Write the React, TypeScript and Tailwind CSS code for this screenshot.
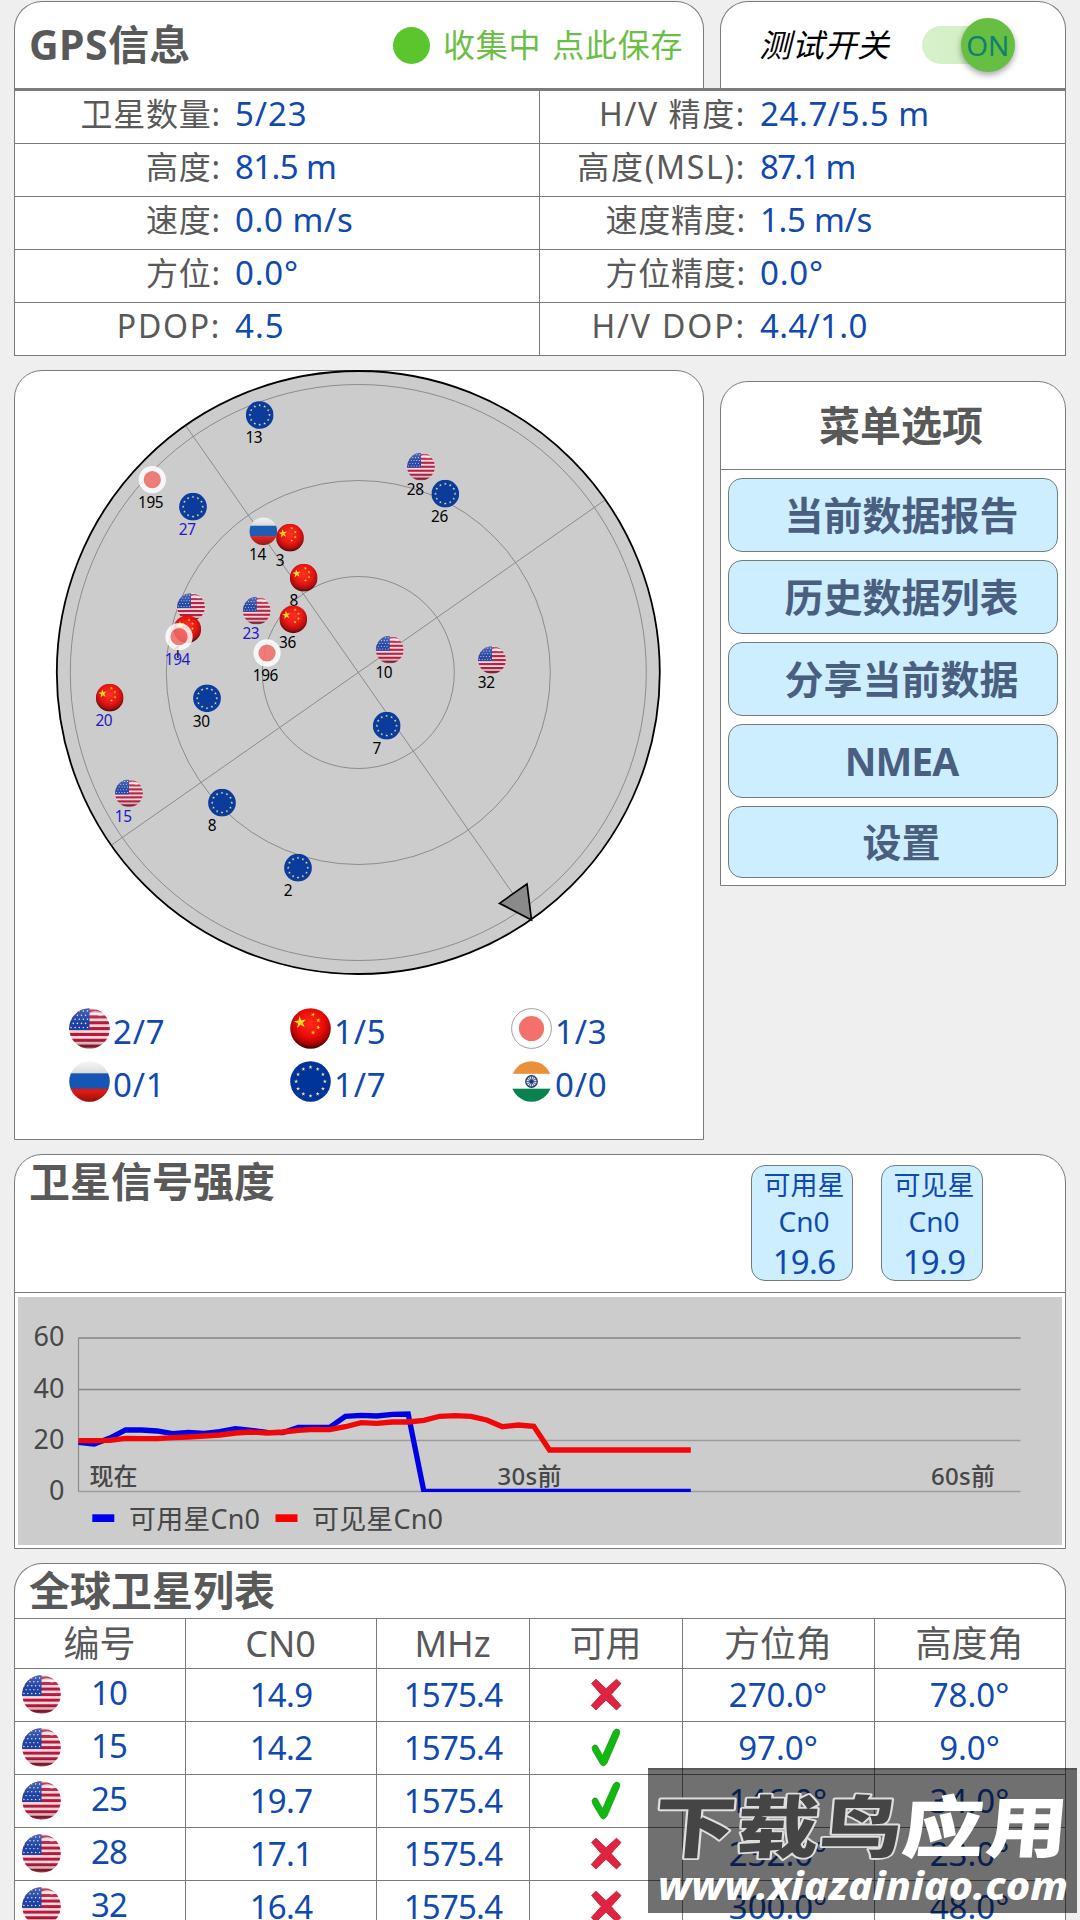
import React from "react";

type Country = "us" | "cn" | "jp" | "ru" | "eu" | "in";

const STAR = "M0,-1 L0.225,-0.309 L0.951,-0.309 L0.363,0.118 L0.588,0.809 L0,0.382 L-0.588,0.809 L-0.363,0.118 L-0.951,-0.309 L-0.225,-0.309 Z";

function SharedDefs() {
  return (
    <svg className="absolute size-0" aria-hidden="true">
      <defs>
        <clipPath id="disc">
          <circle cx="20" cy="20" r="19.8" />
        </clipPath>
        <linearGradient id="gloss" x1="0" y1="0" x2="0" y2="1">
          <stop offset="0" stopColor="#fff" stopOpacity="0.2" />
          <stop offset="0.35" stopColor="#fff" stopOpacity="0" />
          <stop offset="0.75" stopColor="#000" stopOpacity="0" />
          <stop offset="1" stopColor="#000" stopOpacity="0.35" />
        </linearGradient>
        <radialGradient id="redBall" cx="0.5" cy="0.38" r="0.62">
          <stop offset="0" stopColor="#ff2a1a" />
          <stop offset="0.55" stopColor="#ea0b08" />
          <stop offset="0.82" stopColor="#a80404" />
          <stop offset="1" stopColor="#3c0000" />
        </radialGradient>
        <linearGradient id="ruWhite" x1="0" y1="0" x2="0" y2="1">
          <stop offset="0" stopColor="#f4f4f4" />
          <stop offset="1" stopColor="#d8d8d8" />
        </linearGradient>
      </defs>
    </svg>
  );
}

function FlagArt({ country }: { country: Country }) {
  switch (country) {
    case "us":
      return (
        <g clipPath="url(#disc)">
          <rect width="40" height="40" fill="#fbd5dc" />
          {[1.5, 7.2, 12.9, 18.6, 24.3, 30, 35.7].map((y) => (
            <rect key={y} y={y} width="40" height="3" fill="#b31b3c" />
          ))}
          <rect width="20" height="21.5" fill="#1c41a2" />
          {[3, 7, 11, 15, 19].map((y, r) =>
            [2, 6, 10, 14, 18].map((x) => (
              <circle key={`${x}-${y}`} cx={x + (r % 2 ? -1.8 : 0)} cy={y} r="0.75" fill="#dfe6fa" />
            )),
          )}
          <path d="M21 4 Q29 1 34 7 L30 8 Q26 5 21 6 Z" fill="#fff" opacity="0.55" />
          <rect width="40" height="40" fill="url(#gloss)" />
        </g>
      );
    case "cn":
      return (
        <g>
          <circle cx="20" cy="20" r="19.8" fill="url(#redBall)" />
          <path d={STAR} transform="translate(10 14) scale(6.3) rotate(-8)" fill="#ffd91a" />
          <path d={STAR} transform="translate(22.5 6.5) scale(2.3) rotate(20)" fill="#ffd21a" />
          <path d={STAR} transform="translate(27.5 12) scale(2.3)" fill="#ffd21a" />
          <path d={STAR} transform="translate(27.5 19) scale(2.3) rotate(20)" fill="#ffd21a" />
          <path d={STAR} transform="translate(22.5 24) scale(2.3)" fill="#ffd21a" />
        </g>
      );
    case "jp":
      return (
        <g>
          <circle cx="20" cy="20" r="19.5" fill="#fff" />
          <circle cx="20" cy="20" r="12.3" fill="#f4706c" />
        </g>
      );
    case "ru":
      return (
        <g clipPath="url(#disc)">
          <rect width="40" height="13" fill="url(#ruWhite)" />
          <rect y="12" width="40" height="15.5" fill="#1556b4" />
          <rect y="27" width="40" height="13" fill="#dc1a12" />
          <rect width="40" height="40" fill="url(#gloss)" />
        </g>
      );
    case "eu":
      return (
        <g>
          <circle cx="20" cy="20" r="19.8" fill="#00349a" />
          {Array.from({ length: 12 }, (_, i) => {
            const a = (i * Math.PI) / 6;
            return (
              <path
                key={i}
                d={STAR}
                transform={`translate(${20 + 14 * Math.sin(a)} ${20 - 14 * Math.cos(a)}) scale(2.1)`}
                fill="#f3e6a0"
              />
            );
          })}
        </g>
      );
    case "in":
      return (
        <g>
          <g clipPath="url(#disc)">
            <rect width="40" height="40" fill="#fff" />
            <rect width="40" height="12.5" fill="#e8913a" />
            <rect y="27" width="40" height="13" fill="#0c8150" />
          </g>
          <circle cx="20" cy="20" r="5.6" fill="#dfe7f5" stroke="#1c3a6e" strokeWidth="1.3" />
          {Array.from({ length: 6 }, (_, i) => (
            <line key={i} x1="14.8" y1="20" x2="25.2" y2="20" stroke="#1c3a6e" strokeWidth="0.7" transform={`rotate(${i * 30} 20 20)`} />
          ))}
          <circle cx="20" cy="20" r="1.8" fill="#1c3a6e" />
        </g>
      );
  }
}

function Flag({ country, className }: { country: Country; className: string }) {
  return (
    <svg viewBox="0 0 40 40" className={className}>
      <FlagArt country={country} />
      {country === "jp" && <circle cx="20" cy="20" r="19.4" fill="none" stroke="#8a8a8a" strokeWidth="0.8" />}
    </svg>
  );
}

type Field = { label: string; value: string; labelSpacing: string; spacing: string };

const INFO: [Field, Field][] = [
  [
    { label: "卫星数量:", value: "5/23", labelSpacing: "tracking-[0.8px]", spacing: "tracking-[0.9px]" },
    { label: "H/V 精度:", value: "24.7/5.5 m", labelSpacing: "tracking-[1.6px]", spacing: "tracking-[0.6px]" },
  ],
  [
    { label: "高度:", value: "81.5 m", labelSpacing: "tracking-[0.8px]", spacing: "tracking-[-0.6px]" },
    { label: "高度(MSL):", value: "87.1 m", labelSpacing: "tracking-[1.7px]", spacing: "tracking-[-1.7px]" },
  ],
  [
    { label: "速度:", value: "0.0 m/s", labelSpacing: "tracking-[0.8px]", spacing: "tracking-[0.6px]" },
    { label: "速度精度:", value: "1.5 m/s", labelSpacing: "tracking-[0.8px]", spacing: "tracking-[-0.3px]" },
  ],
  [
    { label: "方位:", value: "0.0°", labelSpacing: "tracking-[0.8px]", spacing: "tracking-[0.8px]" },
    { label: "方位精度:", value: "0.0°", labelSpacing: "tracking-[0.8px]", spacing: "tracking-[0.8px]" },
  ],
  [
    { label: "PDOP:", value: "4.5", labelSpacing: "tracking-[1.7px]", spacing: "tracking-[1px]" },
    { label: "H/V DOP:", value: "4.4/1.0", labelSpacing: "tracking-[1.9px]", spacing: "tracking-[0.3px]" },
  ],
];

function InfoCell({ label, value, labelSpacing, spacing }: Field) {
  return (
    <div className="flex items-center pb-[7px] leading-none">
      <span className={`w-[206px] text-right text-[32px] text-[#595959] ${labelSpacing}`}>{label}</span>
      <span className={`ml-[14px] text-[33px] font-[450] text-[#1049b0] ${spacing}`}>{value}</span>
    </div>
  );
}

function InfoPanel() {
  return (
    <section>
      <div className="flex justify-between">
        <div className="flex h-[87px] w-[690px] items-center rounded-t-[28px] border border-b-0 border-[#7b7b7b] bg-white pl-[14px]">
          <h1 className="w-[364px] text-[41px] font-bold tracking-[0.4px] text-[#595959]">GPS信息</h1>
          <span className="size-[37px] rounded-full bg-[#5ac52d]" />
          <span className="ml-[13px] text-[32px] tracking-[0.75px] text-[#6cbe45] [word-spacing:2px]">收集中 点此保存</span>
        </div>
        <div className="flex h-[87px] w-[346px] items-center rounded-t-[28px] border border-b-0 border-[#7b7b7b] bg-white pl-[38px]">
          <span className="text-[32px] tracking-[0.7px] text-black italic">测试开关</span>
          <span className="ml-[32px] flex h-[38px] w-[88px] items-center justify-end rounded-full bg-gradient-to-r from-[#d8f1cc] to-[#cdedc0]">
            <span className="-mr-[5px] flex size-[54px] shrink-0 items-center justify-center rounded-full bg-[#66bf42] text-[28px] text-[#10806f] shadow-[0_3px_6px_rgba(0,0,0,0.35)]">
              ON
            </span>
          </span>
        </div>
      </div>
      <div className="border-x border-t-[3px] border-[#7b7b7b] bg-white">
        {INFO.map(([left, right]) => (
          <div key={left.label} className="grid h-[53px] grid-cols-2 divide-x divide-[#7b7b7b] border-b border-[#7b7b7b]">
            <InfoCell {...left} />
            <InfoCell {...right} />
          </div>
        ))}
      </div>
    </section>
  );
}

const SATS: [Country, string, number, number, boolean][] = [
  ["eu", "13", 259.7, 415, false],
  ["jp", "195", 152.3, 479.7, false],
  ["eu", "27", 193, 506.7, true],
  ["ru", "14", 263.3, 531.3, false],
  ["cn", "3", 290, 537.7, false],
  ["us", "28", 421, 466.7, false],
  ["eu", "26", 445.3, 493.7, false],
  ["cn", "8", 303.7, 577.7, false],
  ["us", "", 191, 607, true],
  ["cn", "1", 187.3, 629.3, false],
  ["jp", "194", 179, 636.7, true],
  ["us", "23", 256.7, 610.7, true],
  ["cn", "36", 293.3, 619.3, false],
  ["jp", "196", 267, 653, false],
  ["us", "10", 389.7, 649.7, false],
  ["us", "32", 492, 660, false],
  ["cn", "20", 109.7, 697.7, true],
  ["eu", "30", 207, 698.3, false],
  ["us", "15", 129, 793.3, true],
  ["eu", "8", 222, 802.7, false],
  ["eu", "2", 298, 867.7, false],
  ["eu", "7", 386.7, 725.7, false],
];

function SkyPlot() {
  const cx = 358.3;
  const cy = 672.5;
  return (
    <svg viewBox="15 370 688 610" className="-mt-px block h-[610px] w-[688px]">
      <circle cx={cx} cy={cy} r="301.5" fill="#cccccc" stroke="#000" strokeWidth="1.8" />
      {[96, 192, 288].map((r) => (
        <circle key={r} cx={cx} cy={cy} r={r} fill="none" stroke="#858585" strokeWidth="0.9" />
      ))}
      <line x1={cx - 172.5} y1={cy - 246.7} x2={cx + 172.5} y2={cy + 246.7} stroke="#858585" strokeWidth="0.9" />
      <line x1={cx + 246.7} y1={cy - 172.5} x2={cx - 246.7} y2={cy + 172.5} stroke="#858585" strokeWidth="0.9" />
      <path d="M527 884 L499.5 903.3 L531.5 920 Z" fill="#8a8a8a" stroke="#000" strokeWidth="1.7" />
      {SATS.map(([country, id, x, y, used], i) => (
        <g key={i}>
          <svg x={x - 14} y={y - 14} width="28" height="28" viewBox="0 0 40 40" opacity={country === "jp" ? 0.85 : 0.94}>
            <FlagArt country={country} />
          </svg>
          <text x={x - 14.2} y={y + 28.4} fontSize="15.4" letterSpacing="-0.45" fill={used ? "#2416c8" : "#000"}>
            {id}
          </text>
        </g>
      ))}
    </svg>
  );
}

const TALLY: [Country, string][] = [
  ["us", "2/7"],
  ["cn", "1/5"],
  ["jp", "1/3"],
  ["ru", "0/1"],
  ["eu", "1/7"],
  ["in", "0/0"],
];

function SkyCard() {
  return (
    <section className="h-[770px] w-[690px] rounded-t-[28px] border border-[#7b7b7b] bg-white">
      <SkyPlot />
      <div className="grid grid-cols-[221px_221px_180px] pt-[22px] pl-[54px]">
        {TALLY.map(([country, count]) => (
          <div key={country + count} className="flex h-[53px] items-center leading-none">
            <Flag country={country} className="size-[41px]" />
            <span className="ml-[3px] pt-[5px] text-[33px] font-[450] tracking-[0.8px] text-[#1049b0]">{count}</span>
          </div>
        ))}
      </div>
    </section>
  );
}

const MENU = ["当前数据报告", "历史数据列表", "分享当前数据", "NMEA", "设置"];

function MenuCard() {
  return (
    <section className="mt-[11px] h-[505px] w-[346px] rounded-t-[28px] border border-[#7b7b7b] bg-white">
      <h2 className="flex h-[88px] items-center justify-center border-b border-[#7b7b7b] pl-4 text-[41px] font-bold text-[#595959]">菜单选项</h2>
      <div className="flex flex-col gap-2 px-[7px] pt-2">
        {MENU.map((item) => (
          <button
            key={item}
            className={`flex h-[74px] items-center justify-center rounded-[14px] border border-[#727b80] bg-[#cceeff] pl-[17px] text-[39px] font-bold text-[#4a5f80] last:h-[72px] ${item === "NMEA" ? "tracking-[-1px]" : ""}`}
          >
            {item}
          </button>
        ))}
      </div>
    </section>
  );
}

const USED_CN0 = [877, 882, 864, 840, 840, 843, 851, 847, 850, 845, 836, 841, 847, 848, 832, 832, 832, 799, 796, 798, 793, 792]
  .map((v) => 1150 + v / 3)
  .concat(Array.from({ length: 18 }, () => 1491.5));
const VIEW_CN0 = [
  872, 872, 871, 865, 866, 866, 863, 861, 858, 855, 849, 846, 849, 846, 841, 838, 839, 830, 818, 820, 816, 816, 811, 799, 797, 799,
  810, 830, 825, 829,
]
  .map((v) => 1150 + v / 3)
  .concat(Array.from({ length: 10 }, () => 1450));

const toPoints = (ys: number[]) => ys.map((y, i) => `${(78.5 + i * 15.7).toFixed(1)},${y.toFixed(1)}`).join(" ");

function SignalChart() {
  return (
    <svg viewBox="18 1297 1044 248" className="mx-[3px] mt-1 block h-[248px] w-[1044px] bg-[#cccccc]" fill="#474747">
      <clipPath id="plotArea">
        <rect x="78" y="1330" width="950" height="162" />
      </clipPath>
      {[1338, 1389.5, 1440.5, 1491.5].map((y, i) => (
        <g key={y}>
          <line x1="78.5" x2="1020.5" y1={y} y2={y} stroke={i < 2 ? "#858585" : "#9c9c9c"} strokeWidth="1.3" />
          <text x="64.5" y={y + 8} fontSize="27" textAnchor="end">
            {60 - i * 20}
          </text>
        </g>
      ))}
      <line x1="78.5" x2="78.5" y1="1338" y2="1491.5" stroke="#8a8a8a" strokeWidth="1.2" />
      <g clipPath="url(#plotArea)" fill="none" strokeWidth="5.3">
        <polyline points={toPoints(USED_CN0)} stroke="#0000e4" />
        <polyline points={toPoints(VIEW_CN0)} stroke="#f00808" />
      </g>
      <g fontSize="24" fontWeight="500">
        <text x="89.5" y="1485">现在</text>
        <text x="497.5" y="1485" textLength="64">30s前</text>
        <text x="931" y="1485" textLength="64">60s前</text>
      </g>
      <rect x="92.3" y="1514.3" width="22" height="7.7" fill="#0000f0" />
      <text x="129" y="1529" fontSize="27" textLength="131">可用星Cn0</text>
      <rect x="275.5" y="1514.3" width="22" height="7.7" fill="#fa0000" />
      <text x="312" y="1529" fontSize="27" textLength="131">可见星Cn0</text>
    </svg>
  );
}

function Cn0Chip({ label, value }: { label: string; value: string }) {
  return (
    <div className="flex h-[116px] w-[102px] flex-col items-center rounded-[14px] border border-[#727b80] bg-[#cceeff] pl-[4px] text-[#1049b0]">
      <span className="text-[27px] leading-[37px]">{label}</span>
      <span className="text-[28px] leading-[36px]">Cn0</span>
      <span className="text-[33px] leading-[46px] font-[450] tracking-[-0.7px]">{value}</span>
    </div>
  );
}

function SignalCard() {
  return (
    <section className="mt-[14px] h-[395px] rounded-t-[28px] border border-[#7b7b7b] bg-white">
      <div className="flex h-[138px] border-b border-[#7b7b7b] pl-[14px]">
        <h2 className="w-[722px] text-[41px] leading-[52px] font-bold text-[#595959]">卫星信号强度</h2>
        <div className="flex gap-7 pt-[10px]">
          <Cn0Chip label="可用星" value="19.6" />
          <Cn0Chip label="可见星" value="19.9" />
        </div>
      </div>
      <SignalChart />
    </section>
  );
}

const ROWS: [string, string, boolean, string, string][] = [
  ["10", "14.9", false, "270.0°", "78.0°"],
  ["15", "14.2", true, "97.0°", "9.0°"],
  ["25", "19.7", true, "146.0°", "34.0°"],
  ["28", "17.1", false, "232.0°", "23.0°"],
  ["32", "16.4", false, "300.0°", "48.0°"],
];

function CrossMark() {
  return (
    <svg viewBox="0 0 32 33" className="h-[33px] w-[32px]">
      <path
        d="M1.5 5.5 L6 1.2 L16 10.8 L26.5 1.2 L31 5.5 L21.2 16.5 L31 27.5 L26.5 32 L16 22.2 L6 32 L1.2 27.5 L11.2 16.5 Z"
        fill="#df2340"
        stroke="#b91d35"
        strokeWidth="0.8"
        strokeLinejoin="round"
      />
    </svg>
  );
}

function CheckMark() {
  return (
    <svg viewBox="0 0 30 40" className="h-[40px] w-[30px]">
      <path
        d="M1 20.5 Q2.5 16.5 6 18.5 L11.5 28.5 L22.5 4 Q25 0.5 28.2 3 Q29.3 5 28.3 7.5 L16 36 Q12.5 41.5 9.5 37 L1.8 24 Z"
        fill="#12b80f"
        stroke="#0f9a10"
        strokeWidth="0.7"
      />
    </svg>
  );
}

const GRID = "grid grid-cols-[171px_191px_153px_153px_192px_190px] divide-x divide-[#7b7b7b] border-t border-[#7b7b7b]";

function ListCard() {
  return (
    <section className="mt-[14px] rounded-t-[28px] border border-b-0 border-[#7b7b7b] bg-white">
      <h2 className="h-[54px] pl-[14px] text-[41px] leading-[52px] font-bold text-[#595959]">全球卫星列表</h2>
      <div className={`${GRID} h-[50px] text-[36px] leading-[50px] text-[#595959]`}>
        {["编号", "CN0", "MHz", "可用", "方位角", "高度角"].map((name) => (
          <div key={name} className="pr-px text-center">
            {name}
          </div>
        ))}
      </div>
      {ROWS.map(([id, cn0, usable, azimuth, elevation]) => (
        <div key={id} className={`${GRID} h-[53px] text-center text-[33px] leading-[51px] font-[450] text-[#1049b0]`}>
          <div className="flex items-center leading-none">
            <Flag country="us" className="mb-px ml-[7px] size-[39px]" />
            <span className="w-[96px] pb-[6px] tracking-[-0.8px]">{id}</span>
          </div>
          <div className="tracking-[-0.7px]">{cn0}</div>
          <div className="tracking-[-0.8px]">1575.4</div>
          <div className="flex h-[52px] items-center justify-center pb-[2px]">{usable ? <CheckMark /> : <CrossMark />}</div>
          <div className="pr-px">{azimuth}</div>
          <div className="pr-px">{elevation}</div>
        </div>
      ))}
    </section>
  );
}

function Watermark() {
  return (
    <div className="absolute top-[1768px] left-[648px] h-[145px] w-[429px] border-t-2 border-black/20 bg-black/56">
      <svg viewBox="648 1768 429 145" className="-mt-[2px] block h-[145px] w-[429px]">
        <g transform="translate(652 1852) skewX(-5) scale(1 0.82)" fontSize="82" fontWeight="900" strokeLinejoin="round">
          <text x="0" y="0" fill="#454545" stroke="#dedede" strokeWidth="4.5" paintOrder="stroke" textLength="248">
            下载鸟
          </text>
          <text x="248" y="0" fill="#fff" textLength="166">
            应用
          </text>
        </g>
        <text
          x="658"
          y="1900"
          fill="#fff"
          fontSize="39"
          fontWeight="800"
          fontStyle="italic"
          textLength="410"
          lengthAdjust="spacingAndGlyphs"
        >
          www.xiazainiao.com
        </text>
      </svg>
    </div>
  );
}

export default function App() {
  return (
    <main className="relative h-[1920px] w-[1080px] overflow-hidden bg-[#efefef] pt-px pr-[14px] pl-[14px] font-['Noto_Sans','Noto_Sans_CJK_SC',sans-serif] whitespace-nowrap">
      <SharedDefs />
      <InfoPanel />
      <div className="mt-[14px] flex justify-between">
        <SkyCard />
        <MenuCard />
      </div>
      <SignalCard />
      <ListCard />
      <Watermark />
    </main>
  );
}
